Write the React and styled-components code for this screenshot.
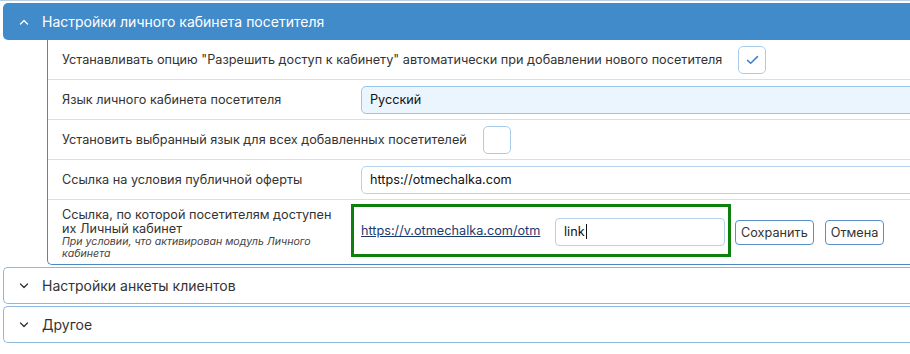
import React from "react";
import styled, { createGlobalStyle } from "styled-components";

const GlobalStyle = createGlobalStyle`
  html, body {
    margin: 0;
    padding: 0;
    background: #ffffff;
    overflow: hidden;
  }
  body {
    font-family: Inter, "Noto Sans", "Liberation Sans", sans-serif;
    color: #333;
  }
`;

const Page = styled.div`
  width: 960px;
  border-top: 1px solid #b9cfe3;
  padding: 2px 0 0 3px;
  display: flex;
  flex-direction: column;
  gap: 2px;
`;

const Section = styled.section`
  display: flex;
  flex-direction: column;
`;

const Header = styled.div`
  display: flex;
  align-items: center;
  height: ${(p) => (p.$open ? "37px" : "35px")};
  padding-left: ${(p) => (p.$open ? "16px" : "15px")};
  gap: 13px;
  font-size: 14px;
  color: ${(p) => (p.$open ? "#ffffff" : "#333")};
  background: ${(p) => (p.$open ? "#428bca" : "#ffffff")};
  border: ${(p) => (p.$open ? "none" : "1px solid #8db8de")};
  border-right: none;
  border-radius: 5px 0 0 5px;
`;

const Chevron = ({ up, color }) => (
  <svg width="10" height="6" viewBox="0 0 10 6" fill="none">
    <path
      d={up ? "M1.5 5 L5 1.5 L8.5 5" : "M1.5 1 L5 4.5 L8.5 1"}
      stroke={color}
      strokeWidth="1.3"
      strokeLinecap="round"
      strokeLinejoin="round"
    />
  </svg>
);

const Body = styled.div`
  margin-left: 44px;
  border-left: 1px solid #4a88c4;
  border-bottom: 1px solid #4a88c4;
  border-bottom-left-radius: 5px;
`;

const Row = styled.div`
  display: flex;
  align-items: ${(p) => (p.$top ? "flex-start" : "center")};
  min-height: ${(p) => p.$h || 39}px;
  border-bottom: 1px solid #cde2f3;
  &:last-child {
    border-bottom: none;
  }
`;

const Label = styled.div`
  font-size: 12.7px;
  line-height: 13.5px;
  color: #333;
  padding-left: 14px;
  box-sizing: border-box;
  ${(p) => (p.$fixed ? "width: 303px; flex: none; padding-right: 10px;" : "")}
  ${(p) => (p.$top ? "padding-top: 8px;" : "")}
`;

const Note = styled.div`
  font-size: 10.6px;
  line-height: 12px;
  font-style: italic;
  color: #444;
  margin-top: 1px;
  padding-right: 20px;
`;

const Checkbox = styled.div`
  width: 26px;
  height: 26px;
  margin-left: 16px;
  border: 1px solid #a8cdea;
  border-radius: 5px;
  display: flex;
  align-items: center;
  justify-content: center;
  background: #fff;
`;

const Field = styled.div`
  flex: 1;
  margin-left: 10px;
  height: 26px;
  border: 1px solid ${(p) => (p.$select ? "#9cc6e8" : "#b5d3ec")};
  border-radius: 5px;
  background: ${(p) => (p.$select ? "#ebf5fe" : "#ffffff")};
  display: flex;
  align-items: center;
  padding-left: 8px;
  font-size: 12.7px;
  color: #111;
`;

const EditBox = styled.div`
  margin-top: 4px;
  width: 367px;
  height: 47px;
  border: 3px solid #0d800d;
  display: flex;
  align-items: center;
  padding-left: 7px;
  gap: 10px;
`;

const Link = styled.a`
  font-size: 12.7px;
  color: #1d3a6e;
  text-decoration: underline;
  white-space: nowrap;
  flex: none;
`;

const TextInput = styled.div`
  width: 160px;
  height: 26px;
  margin-top: 2px;
  margin-left: auto;
  margin-right: 3px;
  border: 1px solid #b5d3ec;
  border-radius: 4px;
  display: flex;
  align-items: center;
  padding-left: 8px;
  font-size: 12.7px;
  color: #111;
`;

const Caret = styled.span`
  display: inline-block;
  width: 1px;
  height: 15px;
  background: #111;
  margin-left: 1px;
`;

const Buttons = styled.div`
  display: flex;
  gap: 11px;
  margin-left: 4px;
  margin-top: 20px;
`;

const Button = styled.button`
  height: 25px;
  padding: 0 5px;
  font-family: inherit;
  font-size: 12.7px;
  color: #333;
  background: #fff;
  border: 1px solid #5b8fc7;
  border-radius: 4px;
`;

export default function App() {
  return (
    <>
      <GlobalStyle />
      <Page>
        <Section>
          <Header $open>
            <Chevron up color="#ffffff" />
            <span>Настройки личного кабинета посетителя</span>
          </Header>
          <Body>
            <Row>
              <Label>
                Устанавливать опцию "Разрешить доступ к кабинету" автоматически при добавлении нового посетителя
              </Label>
              <Checkbox>
                <svg width="13" height="10" viewBox="0 0 13 10" fill="none">
                  <path d="M1.5 5.4 L4.7 8.3 L11.5 1.6" stroke="#3f7fd0" strokeWidth="1.5" strokeLinecap="round" strokeLinejoin="round" />
                </svg>
              </Checkbox>
            </Row>
            <Row>
              <Label $fixed>Язык личного кабинета посетителя</Label>
              <Field $select>Русский</Field>
            </Row>
            <Row>
              <Label>Установить выбранный язык для всех добавленных посетителей</Label>
              <Checkbox />
            </Row>
            <Row>
              <Label $fixed>Ссылка на условия публичной оферты</Label>
              <Field>https://otmechalka.com</Field>
            </Row>
            <Row $top $h={64}>
              <Label $fixed $top>
                Ссылка, по которой посетителям доступен их Личный кабинет
                <Note>При условии, что активирован модуль Личного кабинета</Note>
              </Label>
              <EditBox>
                <Link href="#">https://v.otmechalka.com/otm</Link>
                <TextInput>
                  link
                  <Caret />
                </TextInput>
              </EditBox>
              <Buttons>
                <Button>Сохранить</Button>
                <Button>Отмена</Button>
              </Buttons>
            </Row>
          </Body>
        </Section>
        <Section>
          <Header>
            <Chevron color="#333" />
            <span>Настройки анкеты клиентов</span>
          </Header>
        </Section>
        <Section>
          <Header>
            <Chevron color="#333" />
            <span>Другое</span>
          </Header>
        </Section>
      </Page>
    </>
  );
}
